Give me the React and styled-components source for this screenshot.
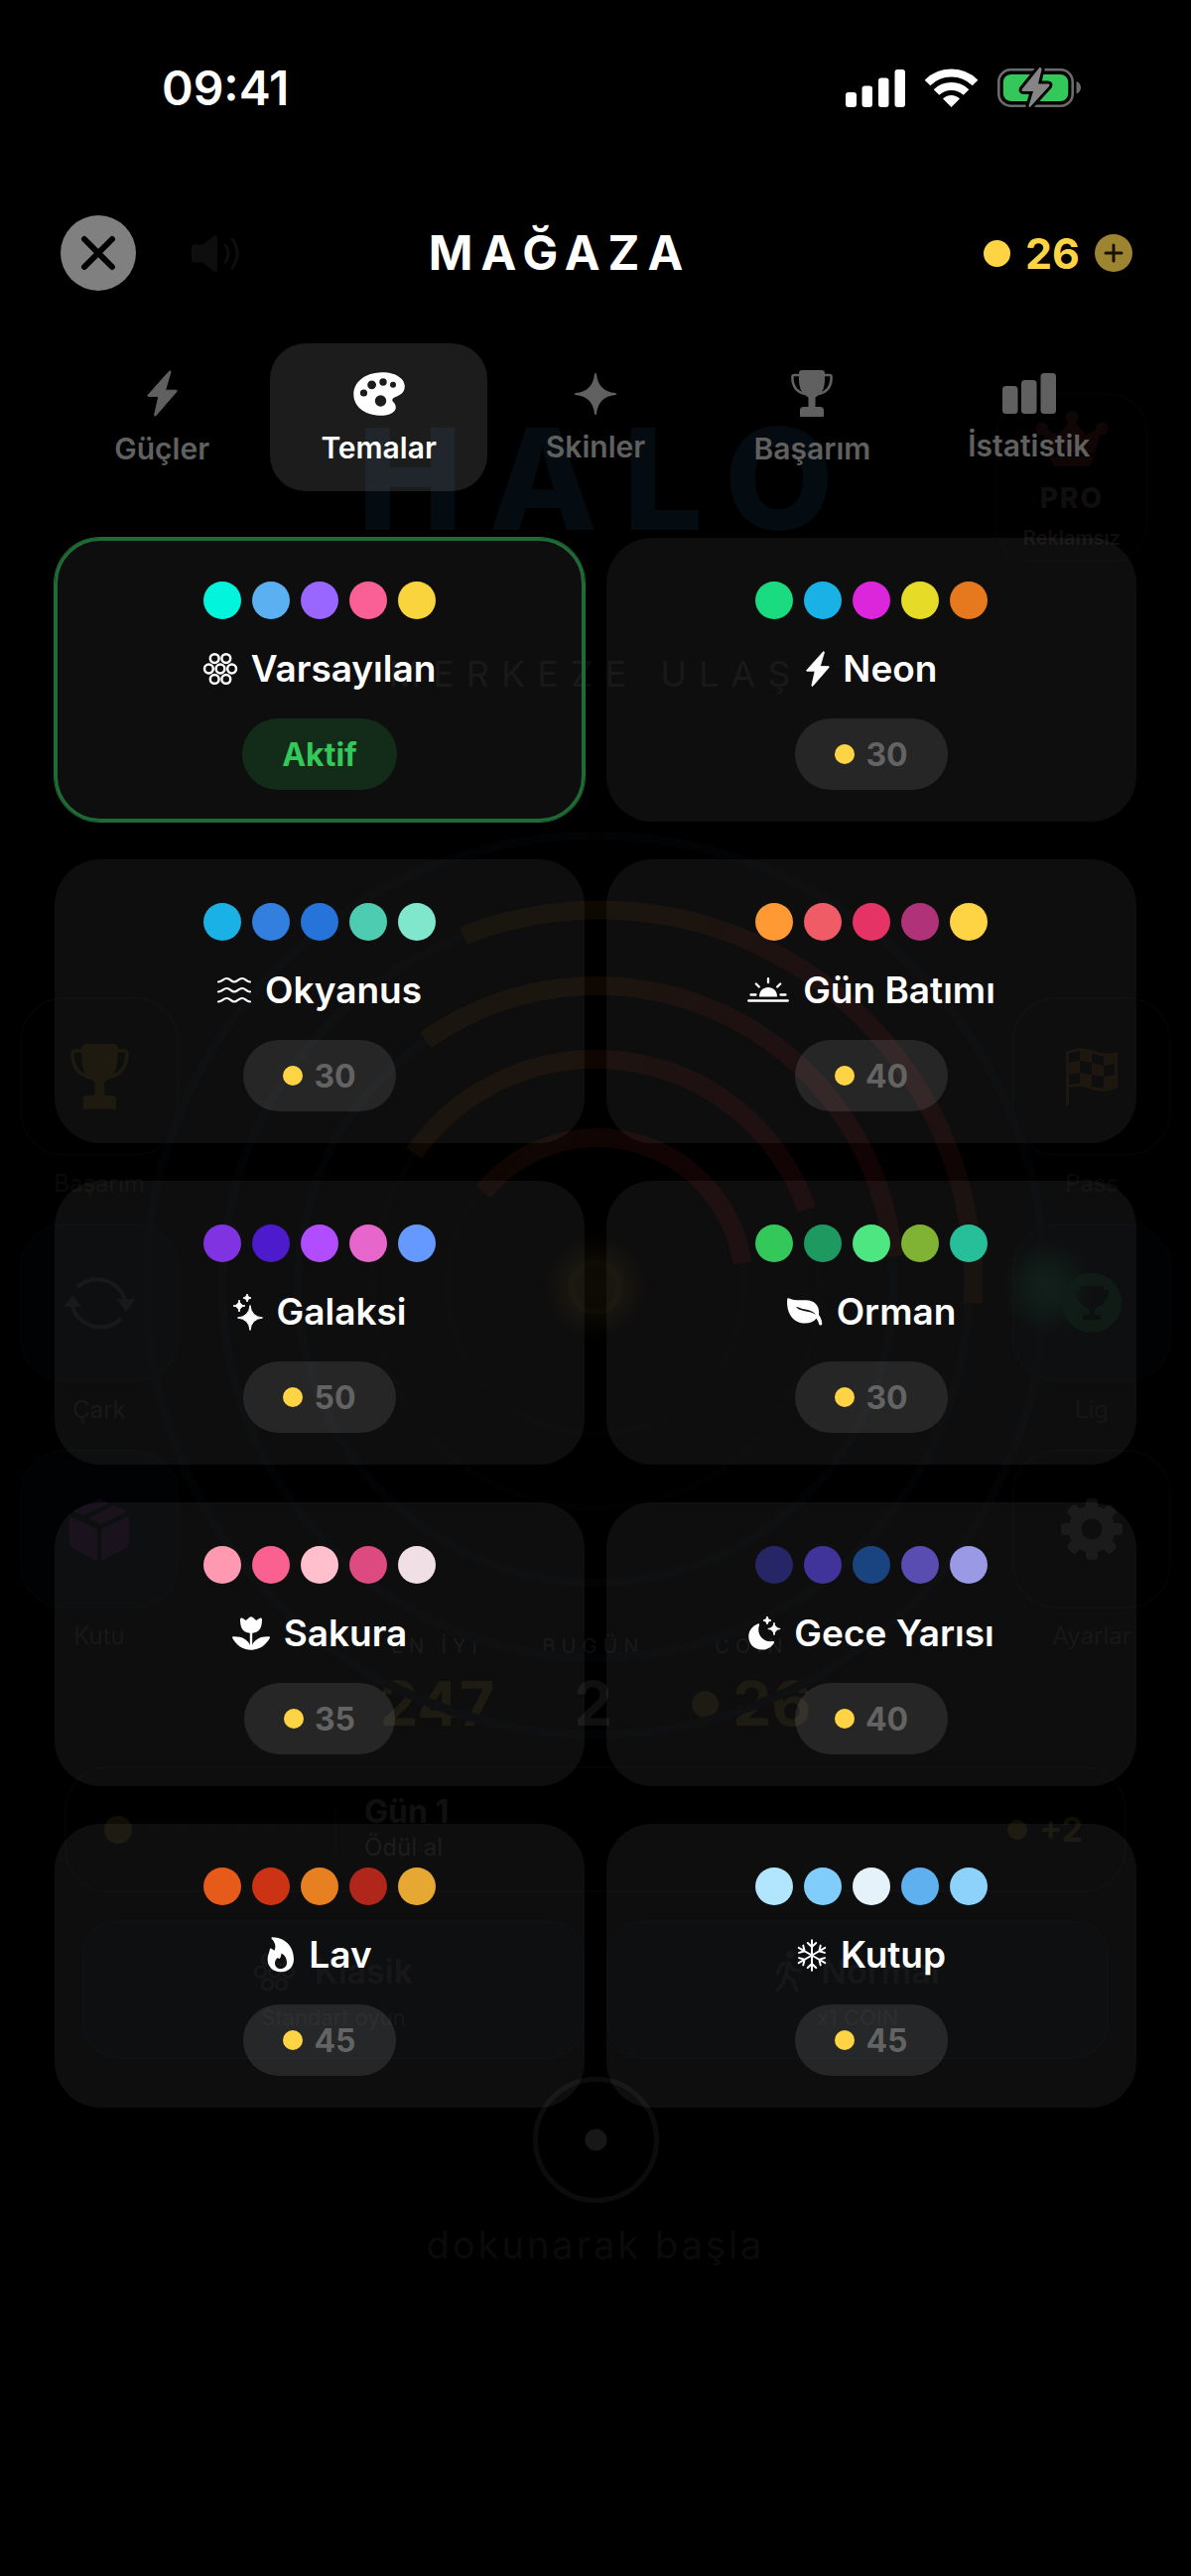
import React, { useState } from 'react';
import styled, { createGlobalStyle } from 'styled-components';

const GlobalStyle = createGlobalStyle`
  * {
    box-sizing: border-box;
  }

  body {
    margin: 0;
    background: #000;
    color: #fff;
    font-family: Inter, 'Liberation Sans', sans-serif;
  }

  button {
    padding: 0;
    border: 0;
    background: none;
    color: inherit;
    font: inherit;
    cursor: pointer;
  }

  svg {
    display: block;
    flex-shrink: 0;
    overflow: visible;
  }
`;

/* Two stacked layers: the home screen and the shop sheet over it */

const Screen = styled.div`
  display: grid;
  min-height: 100vh;
  overflow: hidden;
`;

const Home = styled.div`
  grid-area: 1 / 1;
  min-width: 0;
  opacity: 0.1;
`;

const Sheet = styled.main`
  grid-area: 1 / 1;
  min-width: 0;
  z-index: 1;
`;

/* ---------- Home screen ---------- */

const SoundRow = styled.div`
  display: flex;
  align-items: center;
  height: 76px;
  margin-top: 217px;
  padding-left: 193px;
  color: #888;
`;

const Hero = styled.div`
  display: grid;
  grid-template-columns: 1fr auto 1fr;
  align-items: center;
  margin-top: 103px;
  padding-right: 43px;
  padding-left: 69px;
`;

const Logo = styled.h2`
  grid-column: 2;
  margin: 0;
  color: #3278aa;
  font-size: 142px;
  line-height: 144px;
  font-weight: 800;
  letter-spacing: 26px;
`;

const Pro = styled.button`
  display: flex;
  flex-direction: column;
  align-items: center;
  justify-self: end;
  width: 154px;
  height: 171px;
  padding-top: 16px;
  border: 2px solid #3a1c1c;
  border-radius: 40px;
  color: #998888;
  font-size: 20px;
  line-height: 24px;
  font-weight: 600;

  svg {
    color: #aa4040;
  }

  strong {
    margin: 20px 0 16px;
    font-size: 28px;
    font-weight: 800;
    letter-spacing: 2px;
  }
`;

const Tagline = styled.p`
  margin: 90px 0 0;
  color: #777;
  font-size: 36px;
  line-height: 44px;
  text-align: center;
  letter-spacing: 12px;
`;

const Arena = styled.div`
  display: grid;
  grid-template-columns: 160px 1fr 160px;
  margin-top: 140px;
  padding: 0 20px;

  > svg {
    grid-area: 1 / 1 / 2 / 4;
    justify-self: center;
    z-index: 1;
  }
`;

const Side = styled.div`
  display: flex;
  flex-direction: column;
  gap: 12px;
  grid-area: ${p => (p.right ? '1 / 3' : '1 / 1')};
  padding-top: 164px;
`;

const SideButton = styled.button`
  display: block;
  color: ${p => p.color};
  font-size: 24px;
  line-height: 56px;
  text-align: center;
`;

const Tile = styled.span`
  display: flex;
  align-items: center;
  justify-content: center;
  height: 160px;
  border: 2px solid #222a2c;
  border-radius: 44px;
  background: ${p => (p.blue ? '#0c1420' : 'transparent')};
`;

const Stats = styled.dl`
  display: flex;
  grid-area: 1 / 2;
  align-self: end;
  justify-content: center;
  gap: 48px;
  margin: 0;
  text-align: center;

  dt {
    color: #888;
    font-size: 20px;
    line-height: 28px;
    letter-spacing: 6px;
  }

  dd {
    display: flex;
    align-items: center;
    justify-content: center;
    gap: 14px;
    margin: 12px 0 0;
    color: #aa8c30;
    font-size: 62px;
    line-height: 64px;
    font-weight: 700;
  }

  dd.plain {
    color: #999;
  }
`;

const Coin = styled.span`
  flex-shrink: 0;
  width: ${p => p.size}px;
  height: ${p => p.size}px;
  border-radius: 50%;
  background: ${p => p.tone || '#ffd444'};
`;

const Daily = styled.button`
  display: grid;
  grid-template-columns: 234px 1fr auto;
  align-items: center;
  width: calc(100% - 130px);
  height: 127px;
  margin: 31px 65px 0;
  padding: 0 42px 0 38px;
  border: 2px solid #222a2c;
  border-radius: 44px;
  color: #999;
  text-align: left;
`;

const Streak = styled.span`
  display: flex;
  align-items: center;
  gap: 16px;
  height: 48px;
  border-right: 2px solid #222;
`;

const DayText = styled.span`
  display: flex;
  flex-direction: column;
  padding-left: 28px;
  font-size: 24px;
  line-height: 36px;

  strong {
    font-size: 32px;
    font-weight: 700;
  }
`;

const Reward = styled.span`
  display: flex;
  align-items: center;
  gap: 12px;
  color: #aa8c30;
  font-size: 34px;
  font-weight: 700;
`;

const Modes = styled.div`
  display: grid;
  grid-template-columns: 1fr 1fr;
  gap: 22px;
  margin-top: 28px;
  padding: 0 83px;
`;

const Mode = styled.button`
  display: flex;
  flex-direction: column;
  align-items: center;
  height: 140px;
  padding-top: 26px;
  border: 2px solid #1a2630;
  border-radius: 36px;
  background: #0a141e;
  color: #667;
  font-size: 22px;
  line-height: 44px;

  > span {
    display: flex;
    align-items: center;
    gap: 20px;
    font-size: 34px;
    line-height: 48px;
    font-weight: 600;
  }
`;

const TapHint = styled.div`
  display: flex;
  flex-direction: column;
  align-items: center;
  gap: 20px;
  margin-top: 18px;
  color: #666;
  font-size: 38px;
  line-height: 44px;
  letter-spacing: 3px;
`;

/* ---------- Shop sheet ---------- */

const StatusBar = styled.div`
  display: flex;
  align-items: center;
  gap: 20px;
  height: 57px;
  margin-top: 60px;
  padding: 0 111px 0 163px;
`;

const Time = styled.time`
  flex: 1;
  font-size: 48px;
  line-height: 56px;
  font-weight: 600;
`;

const Header = styled.header`
  display: flex;
  align-items: center;
  justify-content: space-between;
  margin-top: 100px;
  padding: 0 59px 0 61px;
`;

const RoundButton = styled.button`
  display: flex;
  align-items: center;
  justify-content: center;
  width: ${p => p.size}px;
  height: ${p => p.size}px;
  border-radius: 50%;
  background: ${p => p.tone};
`;

const Title = styled.h1`
  margin: 0;
  font-size: 48px;
  line-height: 76px;
  font-weight: 700;
  letter-spacing: 8px;
`;

const Balance = styled.div`
  display: flex;
  align-items: center;
  gap: 15px;
  color: #ffd444;
  font-size: 43px;
  font-weight: 700;
`;

const Tabs = styled.nav`
  display: grid;
  grid-template-columns: repeat(5, 1fr);
  margin-top: 53px;
  padding: 0 54px;
`;

const Tab = styled.button`
  display: flex;
  flex-direction: column;
  align-items: center;
  justify-content: center;
  gap: 16px;
  height: 149px;
  border-radius: 36px;
  background: ${p => (p.$active ? 'rgba(255, 255, 255, 0.11)' : 'none')};
  color: ${p => (p.$active ? '#fff' : '#606060')};
  font-size: 30px;
  line-height: 32px;
  font-weight: 600;
`;

const ThemeGrid = styled.div`
  display: grid;
  grid-template-columns: 1fr 1fr;
  gap: 38px 22px;
  margin-top: 47px;
  padding: 0 55px;
`;

const Card = styled.article`
  display: flex;
  flex-direction: column;
  align-items: center;
  gap: 28px;
  padding: 41px 20px 29px;
  border: 3px solid ${p => (p.$active ? '#1f6b35' : 'transparent')};
  border-radius: 46px;
  background: rgba(255, 255, 255, 0.055) border-box;
  box-shadow: ${p => (p.$active ? '0 0 0 1px #1f6b35' : 'none')};
`;

const Swatches = styled.div`
  display: flex;
  gap: 11px;
`;

const Name = styled.h2`
  display: flex;
  align-items: center;
  gap: 14px;
  margin: 0;
  font-size: 37px;
  line-height: 44px;
  font-weight: 600;
`;

const Pill = styled.button`
  display: flex;
  align-items: center;
  gap: 11px;
  height: 72px;
  padding: 0 40px;
  border-radius: 36px;
  background: ${p => (p.$active ? 'rgba(52, 200, 90, 0.16)' : 'rgba(255, 255, 255, 0.1)')};
  color: ${p => (p.$active ? '#34c85a' : '#636363')};
  font-size: 32px;
  font-weight: 700;
`;

/* ---------- Icons ---------- */

const Icon = ({ w, h, scale = 1, children, ...rest }) => (
  <svg
    width={w * scale}
    height={h * scale}
    viewBox={`0 0 ${w} ${h}`}
    fill='currentColor'
    aria-hidden='true'
    {...rest}
  >
    {children}
  </svg>
);

// four pointed star centred on x, y
const star = (x, y, r) => {
  const k = r * 0.09;
  return `M${x} ${y - r}Q${x + k} ${y - k} ${x + r} ${y}Q${x + k} ${y + k} ${x} ${y + r}Q${x - k} ${y + k} ${x - r} ${y}Q${x - k} ${y - k} ${x} ${y - r}Z`;
};

const hole = (x, y, r) => `M${x - r} ${y}a${r} ${r} 0 1 0 ${2 * r} 0a${r} ${r} 0 1 0 ${-2 * r} 0Z`;

const Bolt = props => (
  <Icon w={31} h={47} {...props}>
    <path
      d='M22.5 1.2L1 25.2c-.4.6-.2 1.2.6 1.2h10.2L7.6 45.2c0 1 .9 1.2 1.5.5L30 21.6c.5-.7.2-1.4-.6-1.4H18.6L24 2c.2-1-.8-1.6-1.5-.8Z'
      stroke='currentColor'
      strokeWidth='1'
      strokeLinejoin='round'
    />
  </Icon>
);

const Palette = () => (
  <Icon w={52} h={44}>
    <path
      fillRule='evenodd'
      d={`M26 .5C38 -1 51.5 4.5 51.8 14C52 21 46.5 23.5 41.5 25.5C38.5 27 39 29 40.8 30.8C43.5 33.5 44 38.5 39 41.2C35 43.3 30.5 44 26 43.7C11 43 .3 34.5 .3 22.5C.3 10 11.5 1.5 26 .5Z${hole(10.5, 21, 3.6)}${hole(18.6, 12.8, 4.4)}${hole(30, 10, 3.7)}${hole(40, 12.7, 3)}${hole(27.5, 29, 5.7)}`}
    />
  </Icon>
);

const Sparkle = () => (
  <Icon w={42} h={42}>
    <path d={star(21, 21, 20)} stroke='currentColor' strokeWidth='2' strokeLinejoin='round' />
  </Icon>
);

const Trophy = props => (
  <Icon w={42} h={47} {...props}>
    <path d='M11 0h20c2 0 3 1.2 3 3c0 5 .4 11-1.5 16c-1.500 4-5 6.500-8 8.500V37h5c2.200 0 3.500 1.300 3.500 3.500V46c0 .6-.4 1-1 1H10c-.6 0-1-.4-1-1v-5.500C9 38.300 10.300 37 12.500 37h5v-9.500c-3-2-6.500-4.500-8-8.500C7.600 14 8 8 8 3c0-1.800 1-3 3-3Z' />
    <path
      d='M8.500 5H3.500C2 5 1.400 5.700 1.400 7C1.400 15.500 5 22 14 24M33.500 5h5c1.500 0 2.100.7 2.100 2C40.600 15.500 37 22 28 24'
      fill='none'
      stroke='currentColor'
      strokeWidth='2.6'
    />
  </Icon>
);

const Bars = () => (
  <Icon w={54} h={41}>
    <rect y='13' width='15.5' height='28' rx='3.5' />
    <rect x='19' y='7' width='15.5' height='34' rx='3.5' />
    <rect x='38.5' width='15.5' height='41' rx='3.5' />
  </Icon>
);

const Rosette = props => (
  <Icon w={34} h={32} {...props}>
    <g fill='none' stroke='currentColor' strokeWidth='2.5'>
      <circle cx='11.2' cy='5.6' r='4.4' />
      <circle cx='22.8' cy='5.6' r='4.4' />
      <circle cx='5.4' cy='16' r='4.4' />
      <circle cx='17' cy='16' r='4.4' />
      <circle cx='28.6' cy='16' r='4.4' />
      <circle cx='11.2' cy='26.4' r='4.4' />
      <circle cx='22.8' cy='26.4' r='4.4' />
    </g>
  </Icon>
);

const Waves = () => (
  <Icon w={34} h={26}>
    <g fill='none' stroke='currentColor' strokeWidth='2.2' strokeLinecap='round'>
      {[3, 13, 23].map(y => (
        <path
          key={y}
          d={`M1 ${y + 1.5}C5 ${y + 1.5} 6 ${y - 2} 9.500 ${y - 2}S14 ${y + 1.5} 17 ${y + 1.5}S21.500 ${y - 2} 25 ${y - 2}S29 ${y + 1.5} 33 ${y + 1.5}`}
        />
      ))}
    </g>
  </Icon>
);

const Sunset = () => (
  <Icon w={42} h={26}>
    <path d='M12 19.500C12 13.500 16 10 21 10s9 3.500 9 9.500Z' />
    <path
      d='M1.200 23.500h39.600M3.500 17.500h5M33.500 17.500h5M21 1.200v4M8.800 6.500l3 3M33.200 6.500l-3 3'
      fill='none'
      stroke='currentColor'
      strokeWidth='2.3'
      strokeLinecap='round'
    />
  </Icon>
);

const Sparkles = () => (
  <Icon w={30} h={37}>
    <path
      d={star(17, 24, 12.5) + star(6, 12, 6) + star(14, 4, 4)}
      stroke='currentColor'
      strokeWidth='1'
      strokeLinejoin='round'
    />
  </Icon>
);

const Leaf = () => (
  <Icon w={36} h={28}>
    <path
      fillRule='evenodd'
      d='M1.500.2C8 3.500 16 1.500 22 2.500C29.500 4 33 9.500 32 17C33.500 19 35 22 35.300 25.500C35.400 28 32.500 28.300 32 26C31.500 24 30.800 22.300 29.500 20.800C27 24.500 22 26 16 25.500C6 24.500 -1 15 .2 1.200C.3.200.8 0 1.500.2ZM10 9C9.400 9 9.300 9.700 9.800 10C15.500 14.500 22.500 12.500 29 16.800C25 11 17.500 12.500 10 9Z'
    />
  </Icon>
);

const Tulip = () => (
  <Icon w={38} h={34}>
    <path d='M8 3C8 1.500 9.500 1 10.800 2L13.800 4L17.500.8C18.400 0 19.600 0 20.500.8L24.200 4L27.200 2C28.500 1 30 1.500 30 3C30 10 28.500 16 20.200 16.800V29C22 23.500 28 20 37 20.300C38 20.400 38.200 21.200 37.700 22C33.500 29 28 33.500 19 33.800C10 33.500 4.500 29 .3 22C-.2 21.200 0 20.400 1 20.300C10 20 16 23.500 17.800 29V16.800C9.500 16 8 10 8 3Z' />
  </Icon>
);

const Moon = () => (
  <Icon w={32} h={34}>
    <path d='M9.500 7.500C10.500 7 11.500 8 11 9C8 17 14 26.500 24.500 25C25.800 24.800 26.500 25.800 25.700 26.900C23 31 19 33.500 14 33.500C6 33.500.3 28 .3 20C.3 14.500 4 9.500 9.500 7.500Z' />
    <path
      d={star(19, 4, 4) + star(26, 12.5, 6.2)}
      stroke='currentColor'
      strokeWidth='1'
      strokeLinejoin='round'
    />
  </Icon>
);

const Flame = () => (
  <Icon w={28} h={36}>
    <path
      fillRule='evenodd'
      d='M5.500.3C18 .5 27 9.500 27 22.500C27 30.500 21.500 35.300 14 35.300C6 35.300.6 30 .6 22.500C.6 18 2.500 16 2.800 12.500C2.900 11.500 3.700 11.100 4.500 11.700L7.500 13.800C9.300 9.500 8.300 5.500 4.800 2C4 1.200 4.400.3 5.500.3ZM14.500 16.500C14 19.500 14 20.500 12.500 22L10.600 21C8.800 22.500 8 24.500 8 26.500C8 30 10.500 32 13.800 32C17.500 32 20 29.500 20 26C20 21.500 18 18 14.500 16.500Z'
    />
  </Icon>
);

const Snowflake = () => (
  <Icon w={30} h={33}>
    <g fill='none' stroke='currentColor' strokeWidth='2' strokeLinecap='round' strokeLinejoin='round'>
      {[0, 60, 120, 180, 240, 300].map(a => (
        <path key={a} d='M15 16.500V1.200M10.800 4L15 8L19.200 4' transform={`rotate(${a} 15 16.5)`} />
      ))}
    </g>
  </Icon>
);

const Signal = () => (
  <Icon w={60} h={38}>
    <rect y='23' width='11' height='15' rx='3' />
    <rect x='16.5' y='16.5' width='10.5' height='21.5' rx='3' />
    <rect x='33' y='8.5' width='10.5' height='29.5' rx='3' />
    <rect x='49.5' width='10.5' height='38' rx='3' />
  </Icon>
);

const Wifi = () => (
  <Icon w={53} h={38}>
    <g fill='none' stroke='currentColor' strokeWidth='8'>
      <path d='M2.500 13.500A34 34 0 0 1 50.500 13.500' />
      <path d='M11.500 23A21.500 21.500 0 0 1 41.500 23' />
    </g>
    <path d='M26.500 38L18 29.500A12 12 0 0 1 35 29.500Z' />
  </Icon>
);

const Battery = () => (
  <Icon w={84} h={39}>
    <rect
      x='1.3'
      y='1.3'
      width='74.4'
      height='36.4'
      rx='12'
      fill='none'
      stroke='#6b6b6b'
      strokeWidth='2.6'
    />
    <rect x='5.8' y='6' width='65.5' height='27' rx='8' fill='#34c85a' />
    <path d='M79.500 13c6 2 6 10.500 0 12.500Z' fill='#6b6b6b' />
    <path
      d='M42 -.5L25 20.500c-1 1.500-.4 2.500 1 2.500h10L31.500 37.500c-.2 1.500 1 2 2 .8L52 18c1-1.500.5-2.500-1-2.500H41L44.500 1C44.600-.6 43-1.500 42-.5Z'
      fill='#858585'
      stroke='#000'
      strokeWidth='6'
      paintOrder='stroke'
    />
  </Icon>
);

const Cross = () => (
  <Icon w={34} h={34}>
    <path d='M3 3L31 31M31 3L3 31' stroke='#000' strokeWidth='6' strokeLinecap='round' />
  </Icon>
);

const Plus = () => (
  <Icon w={18} h={18}>
    <path d='M9 1V17M1 9H17' stroke='#14110a' strokeWidth='3' strokeLinecap='round' />
  </Icon>
);

const Speaker = () => (
  <Icon w={50} h={37}>
    <path d='M0 12c0-1.500 1-2.500 2.500-2.500H11L23 .8c1.500-1 3-.3 3 1.400V35c0 1.700-1.500 2.400-3 1.400L11 27.500H2.500C1 27.500 0 26.500 0 25Z' />
    <path
      d='M34 10Q40 18.500 34 27M41 4Q51 18.500 41 33'
      fill='none'
      stroke='currentColor'
      strokeWidth='3'
      strokeLinecap='round'
    />
  </Icon>
);

const Crown = () => (
  <Icon w={74} h={56}>
    <path d='M7 17L23 24L37 8L51 24L67 17L60 42H14ZM15 46H59L56 54Q55 56 53 56H21Q19 56 18 54Z' />
    <circle cx='7' cy='18' r='6.5' />
    <circle cx='37' cy='6.5' r='6.5' />
    <circle cx='67' cy='18' r='6.5' />
  </Icon>
);

const Cycle = () => (
  <Icon w={72} h={56}>
    <path
      d='M14 12A29 28 0 0 1 62 25M58 44A29 28 0 0 1 9 31'
      fill='none'
      stroke='currentColor'
      strokeWidth='4'
    />
    <path d='M54 24H72L63 37ZM0 32H18L9 20Z' />
  </Icon>
);

const Box = () => (
  <Icon w={60} h={64}>
    <path d='M18 7L28 2Q30 1 32 2L40 6L14 18L3 14ZM45 8L58 14L31 27L19 21ZM0 19L28 32V64L3 51Q0 49 0 46ZM60 19L32 32V64L57 51Q60 49 60 46Z' />
  </Icon>
);

const Flag = () => (
  <Icon w={52} h={57}>
    <path
      fill='none'
      stroke='currentColor'
      strokeWidth='3'
      d='M1.500 57V4Q13-2 26 3T50.500 5V38Q38 44 26 39T1.500 38'
    />
    <path d='M14 1L26 3V14L14 12ZM38 6L50 4V15L38 17ZM2 14L14 12V24L2 26ZM26 14L38 17V28L26 26ZM14 24L26 26V38L14 37ZM38 28L50 26V38L38 41Z' />
  </Icon>
);

const League = () => (
  <Icon w={60} h={60}>
    <path
      fillRule='evenodd'
      d={`${hole(30, 30, 30)}M18 13H42V17H47Q47 29 37 33L33 37V42H39V47H21V42H27V37L23 33Q13 29 13 17H18Z`}
    />
  </Icon>
);

const Gear = () => (
  <Icon w={62} h={62}>
    <circle cx='31' cy='31' r='17' fill='none' stroke='currentColor' strokeWidth='13' />
    {[0, 45, 90, 135, 180, 225, 270, 315].map(a => (
      <rect key={a} x='25' y='0' width='12' height='14' rx='4' transform={`rotate(${a} 31 31)`} />
    ))}
  </Icon>
);

const Walker = () => (
  <Icon w={26} h={42}>
    <circle cx='15' cy='4' r='4' />
    <path
      d='M2 23L6 14L14 12L18 19L25 20M13 13L11 25L18 30L22 40M10 26L8 33L2 40'
      fill='none'
      stroke='currentColor'
      strokeWidth='3.5'
      strokeLinecap='round'
      strokeLinejoin='round'
    />
  </Icon>
);

const RINGS = [453, 376, 300, 225, 150];

const ARCS = [
  'M321 102A376 376 0 0 1 834 472',
  'M283 207A300 300 0 0 1 754 425',
  'M271 321A225 225 0 0 1 667 378',
  'M341 360A148 148 0 0 1 602 432'
];

const RingField = () => (
  <svg width='908' height='908' viewBox='0 0 908 908' fill='none' aria-hidden='true'>
    <defs>
      <linearGradient id='arc' x1='300' y1='0' x2='800' y2='460' gradientUnits='userSpaceOnUse'>
        <stop offset='.15' stopColor='#7a5a1c' />
        <stop offset='.4' stopColor='#96401c' />
        <stop offset='.6' stopColor='#b0202c' />
        <stop offset='.8' stopColor='#b0202c' />
        <stop offset='1' stopColor='#7a4a1c' />
      </linearGradient>
      <radialGradient id='ball'>
        <stop stopColor='#4fae90' />
        <stop offset='.35' stopColor='#1a9a70' />
        <stop offset='1' stopColor='#1a9a70' stopOpacity='0' />
      </radialGradient>
      <radialGradient id='core'>
        <stop stopColor='#94742a' />
        <stop offset='.5' stopColor='#6b5520' />
        <stop offset='1' stopColor='#6b5520' stopOpacity='0' />
      </radialGradient>
    </defs>
    {RINGS.map((r, i) => (
      <circle
        key={r}
        cx='454'
        cy='454'
        r={r}
        stroke={i < 3 ? '#141e28' : '#241a16'}
        strokeWidth={i < 3 ? 9 : 6}
      />
    ))}
    {ARCS.map(d => (
      <path key={d} d={d} stroke='url(#arc)' strokeWidth='19' />
    ))}
    <circle cx='454' cy='456' r='56' fill='url(#core)' />
    <circle cx='454' cy='456' r='24' stroke='#94742a' strokeWidth='7' />
    <circle cx='909' cy='456' r='48' fill='url(#ball)' />
  </svg>
);

/* ---------- Data ---------- */

const tabs = [
  { id: 'powers', label: 'Güçler', icon: <Bolt /> },
  { id: 'themes', label: 'Temalar', icon: <Palette /> },
  { id: 'skins', label: 'Skinler', icon: <Sparkle /> },
  { id: 'achievements', label: 'Başarım', icon: <Trophy /> },
  { id: 'stats', label: 'İstatistik', icon: <Bars /> }
];

const themes = [
  { name: 'Varsayılan', icon: <Rosette />, colors: ['#00f5dc', '#5ab0f0', '#9966ff', '#fa6095', '#fad43c'] },
  { name: 'Neon', icon: <Bolt scale={0.77} />, price: 30, colors: ['#1adb80', '#1ab2e6', '#db26db', '#e6db26', '#e6781e'] },
  { name: 'Okyanus', icon: <Waves />, price: 30, colors: ['#1ab2e6', '#337fe0', '#2673d9', '#4dccb2', '#80e6cc'] },
  { name: 'Gün Batımı', icon: <Sunset />, price: 40, colors: ['#ff9933', '#f05c66', '#e63366', '#b0337a', '#ffd444'] },
  { name: 'Galaksi', icon: <Sparkles />, price: 50, colors: ['#8033e0', '#4d1acc', '#b24dff', '#e666cc', '#6699ff'] },
  { name: 'Orman', icon: <Leaf />, price: 30, colors: ['#34c85a', '#1e9960', '#4de680', '#80b233', '#26bf99'] },
  { name: 'Sakura', icon: <Tulip />, price: 35, colors: ['#ff99b2', '#fa6090', '#ffbfcc', '#dc4a80', '#f0e0e6'] },
  { name: 'Gece Yarısı', icon: <Moon />, price: 40, colors: ['#262666', '#403399', '#1a4480', '#594db2', '#9999e6'] },
  { name: 'Lav', icon: <Flame />, price: 45, colors: ['#e65a1a', '#cc3314', '#e68020', '#b0261a', '#e6a833'] },
  { name: 'Kutup', icon: <Snowflake />, price: 45, colors: ['#b2e6ff', '#80ccfa', '#e6f2fa', '#5eb0ee', '#8cd2fa'] }
];

const HomeScreen = () => (
  <Home inert aria-hidden='true'>
    <SoundRow>
      <Speaker />
    </SoundRow>
    <Hero>
      <Logo>HALO</Logo>
      <Pro>
        <Crown />
        <strong>PRO</strong>
        Reklamsız
      </Pro>
    </Hero>
    <Tagline>MERKEZE ULAŞ</Tagline>
    <Arena>
      <RingField />
      <Side>
        <SideButton color='#665'>
          <Tile style={{ color: '#aa8020' }}>
            <Trophy scale={1.4} />
          </Tile>
          Başarım
        </SideButton>
        <SideButton color='#778'>
          <Tile blue>
            <Cycle />
          </Tile>
          Çark
        </SideButton>
        <SideButton color='#767'>
          <Tile blue style={{ color: '#80409a' }}>
            <Box />
          </Tile>
          Kutu
        </SideButton>
      </Side>
      <Stats>
        <div>
          <dt>EN İYİ</dt>
          <dd>247</dd>
        </div>
        <div>
          <dt>BUGÜN</dt>
          <dd className='plain'>2</dd>
        </div>
        <div>
          <dt>COIN</dt>
          <dd>
            <Coin size={27} tone='#aa8c30' />
            26
          </dd>
        </div>
      </Stats>
      <Side right>
        <SideButton color='#655'>
          <Tile style={{ color: '#9a6020' }}>
            <Flag />
          </Tile>
          Pass
        </SideButton>
        <SideButton color='#566'>
          <Tile blue style={{ color: '#208a54' }}>
            <League />
          </Tile>
          Lig
        </SideButton>
        <SideButton color='#666'>
          <Tile style={{ color: '#888' }}>
            <Gear />
          </Tile>
          Ayarlar
        </SideButton>
      </Side>
    </Arena>
    <Daily>
      <Streak>
        <Coin size={28} tone='#aa8c30' />
        {[1, 2, 3, 4, 5, 6].map(d => (
          <Coin key={d} size={13} tone='#141a22' />
        ))}
      </Streak>
      <DayText>
        <strong>Gün 1</strong>
        Ödül al
      </DayText>
      <Reward>
        <Coin size={20} tone='#aa8c30' />
        +2
      </Reward>
    </Daily>
    <Modes>
      <Mode>
        <span>
          <Rosette scale={1.2} />
          Klasik
        </span>
        Standart oyun
      </Mode>
      <Mode>
        <span>
          <Walker />
          Normal
        </span>
        x1 COIN
      </Mode>
    </Modes>
    <TapHint>
      <Icon w={127} h={127}>
        <circle cx='63.5' cy='63.5' r='61' fill='none' stroke='#777' strokeWidth='5' />
        <circle cx='63.5' cy='63.5' r='11' fill='#ddd' />
      </Icon>
      dokunarak başla
    </TapHint>
  </Home>
);

const ThemeCard = ({ theme, active, onBuy }) => (
  <Card $active={active}>
    <Swatches>
      {theme.colors.map(c => (
        <Coin key={c} size={38} tone={c} />
      ))}
    </Swatches>
    <Name>
      {theme.icon}
      {theme.name}
    </Name>
    <Pill $active={active} onClick={onBuy}>
      {active ? (
        'Aktif'
      ) : (
        <>
          <Coin size={20} />
          {theme.price}
        </>
      )}
    </Pill>
  </Card>
);

const App = () => {
  const [tab, setTab] = useState('themes');
  const [active, setActive] = useState('Varsayılan');

  return (
    <>
      <GlobalStyle />
      <Screen>
        <HomeScreen />
        <Sheet>
          <StatusBar>
            <Time>09:41</Time>
            <Signal />
            <Wifi />
            <Battery />
          </StatusBar>
          <Header>
            <RoundButton size={76} tone='#808080' aria-label='Kapat'>
              <Cross />
            </RoundButton>
            <Title>MAĞAZA</Title>
            <Balance>
              <Coin size={27} />
              26
              <RoundButton size={38} tone='#9c8430' aria-label='Coin ekle'>
                <Plus />
              </RoundButton>
            </Balance>
          </Header>
          <Tabs>
            {tabs.map(t => (
              <Tab key={t.id} $active={t.id === tab} onClick={() => setTab(t.id)}>
                {t.icon}
                {t.label}
              </Tab>
            ))}
          </Tabs>
          <ThemeGrid>
            {themes.map(t => (
              <ThemeCard
                key={t.name}
                theme={t}
                active={t.name === active}
                onBuy={() => !t.price && setActive(t.name)}
              />
            ))}
          </ThemeGrid>
        </Sheet>
      </Screen>
    </>
  );
};

export default App;
